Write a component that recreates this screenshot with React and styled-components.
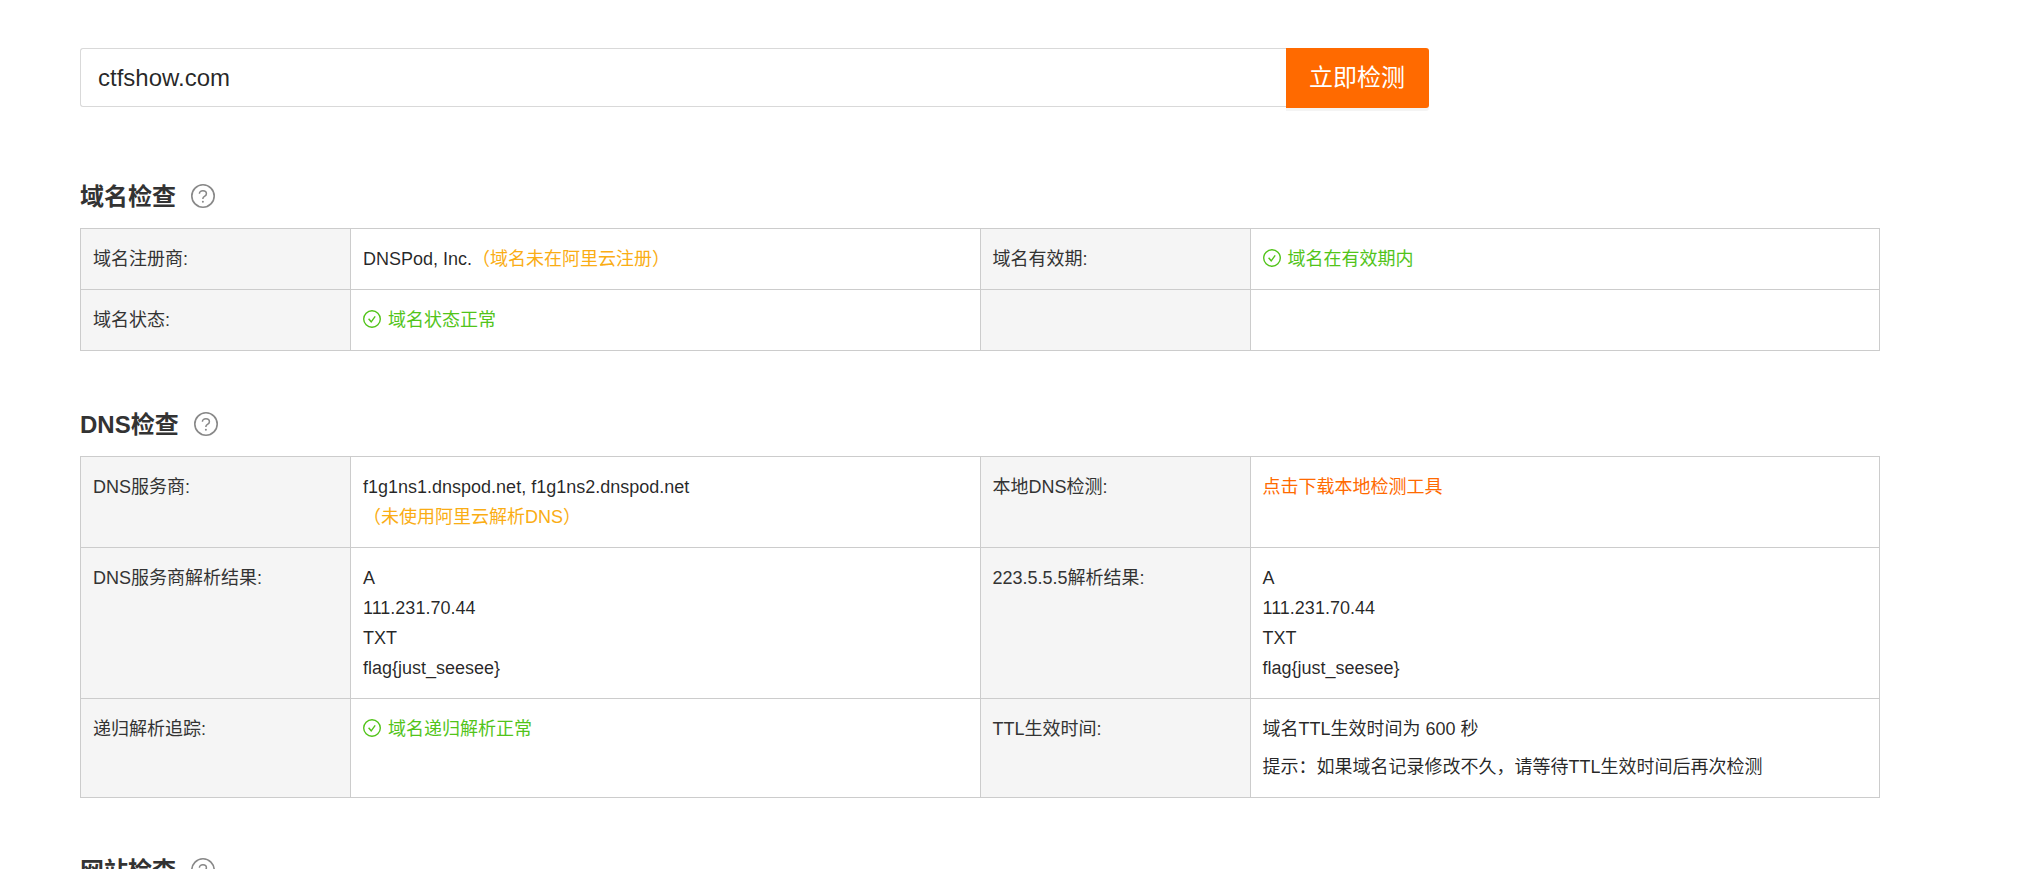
import React from "react"

import styled, { createGlobalStyle } from "styled-components"

const GlobalStyle = createGlobalStyle`
  * {
    box-sizing: border-box;
  }

  body {
    margin: 0;
    background: #fff;
    color: #333;
    font-family: "Liberation Sans", "Noto Sans CJK SC", sans-serif;
    font-size: 18px;
    line-height: 30px;
  }
`

const Page = styled.main`
  height: 869px;
  padding: 48px 153px 0 80px;
  overflow: hidden;
`

const SearchBar = styled.form`
  display: flex;
  align-items: flex-start;
  width: 1349px;
`

const DomainInput = styled.input`
  flex: 1;
  min-width: 0;
  height: 59px;
  padding: 0 17px;
  border: 1px solid #d9d9d9;
  border-right: 0;
  border-radius: 3px 0 0 3px;
  outline: 0;
  background: #fff;
  color: rgba(0, 0, 0, 0.85);
  font: 24px "Liberation Sans", "Noto Sans CJK SC", sans-serif;
`

const CheckButton = styled.button`
  width: 143px;
  height: 60px;
  padding: 0 1px 0 0;
  border: 0;
  border-radius: 0 3px 3px 0;
  background: #ff6a00;
  box-shadow: 0 3px 0 rgba(0, 0, 0, 0.045);
  color: #fff;
  font: 24px/60px "Liberation Sans", "Noto Sans CJK SC", sans-serif;
`

const Section = styled.section`
  margin-top: ${props => props.$gap}px;
`

const SectionTitle = styled.h2`
  display: flex;
  align-items: center;
  height: 36px;
  margin: 0 0 14px;
  font-size: 24px;
  font-weight: 700;
  line-height: 36px;
`

const TitleText = styled.span`
  padding-top: 2px;
`

const HelpSvg = styled.svg`
  width: 24px;
  height: 24px;
  margin-left: 15px;
  color: #888;
`

const Table = styled.div`
  display: grid;
  grid-template-columns: 270px 630px 270px 629px;
  width: 1800px;
  border-top: 1px solid #ccc;
  border-left: 1px solid #ccc;
`

const Cell = styled.div`
  padding: 15px 12px;
  border-right: 1px solid #ccc;
  border-bottom: 1px solid #ccc;
  min-height: 61px;

  &:nth-child(4n + 3),
  &:nth-child(4n) {
    padding-left: 11.5px;
  }
`

const Label = styled(Cell)`
  background: #f5f5f5;
`

const Value = styled(Cell)`
  color: rgba(0, 0, 0, 0.85);
`

const Notice = styled.span`
  color: #faad14;
`

const Link = styled.a`
  color: #ff6a00;
`

const Hint = styled.div`
  margin-top: 8px;
`

const Status = styled.div`
  display: flex;
  color: #52c41a;
`

const CheckSvg = styled.svg`
  flex: none;
  width: 18px;
  height: 18px;
  margin: 5px 7px 0 0;
`

const HelpIcon = () => (
  <HelpSvg viewBox="0 0 24 24" fill="none" stroke="currentColor">
    <circle cx="12" cy="12" r="11.2" strokeWidth="1.6" />
    <path
      d="M8.4 9.8C8.4 7.9 9.9 6.7 11.9 6.7s3.5 1.2 3.5 3c0 1.4-.8 2.1-1.9 2.7-1.1.6-1.6 1.1-1.6 2.2v.5"
      strokeWidth="1.5"
    />
    <circle cx="11.9" cy="17.7" r="1" fill="currentColor" stroke="none" />
  </HelpSvg>
)

const Ok = ({ children }) => (
  <Status>
    <CheckSvg viewBox="0 0 18 18" fill="none" stroke="currentColor">
      <circle cx="9" cy="9" r="8.3" strokeWidth="1.4" />
      <path d="M5.6 8.7l2.6 3.1 4-5.4" strokeWidth="1.4" />
    </CheckSvg>
    <span>{children}</span>
  </Status>
)

const Title = ({ children }) => (
  <SectionTitle>
    <TitleText>{children}</TitleText>
    <HelpIcon />
  </SectionTitle>
)

const Records = () => (
  <Value>
    <div>A</div>
    <div>111.231.70.44</div>
    <div>TXT</div>
    <div>flag&#123;just_seesee&#125;</div>
  </Value>
)

const App = () => (
  <>
    <GlobalStyle />
    <Page>
      <SearchBar>
        <DomainInput defaultValue="ctfshow.com" spellCheck={false} />
        <CheckButton type="button">立即检测</CheckButton>
      </SearchBar>

      <Section $gap={70}>
        <Title>域名检查</Title>
        <Table>
          <Label>域名注册商:</Label>
          <Value>
            DNSPod, Inc.<Notice>（域名未在阿里云注册）</Notice>
          </Value>
          <Label>域名有效期:</Label>
          <Value>
            <Ok>域名在有效期内</Ok>
          </Value>
          <Label>域名状态:</Label>
          <Value>
            <Ok>域名状态正常</Ok>
          </Value>
          <Label />
          <Value />
        </Table>
      </Section>

      <Section $gap={55}>
        <Title>DNS检查</Title>
        <Table>
          <Label>DNS服务商:</Label>
          <Value>
            <div>f1g1ns1.dnspod.net, f1g1ns2.dnspod.net</div>
            <Notice>（未使用阿里云解析DNS）</Notice>
          </Value>
          <Label>本地DNS检测:</Label>
          <Value>
            <Link>点击下载本地检测工具</Link>
          </Value>
          <Label>DNS服务商解析结果:</Label>
          <Records />
          <Label>223.5.5.5解析结果:</Label>
          <Records />
          <Label>递归解析追踪:</Label>
          <Value>
            <Ok>域名递归解析正常</Ok>
          </Value>
          <Label>TTL生效时间:</Label>
          <Value>
            <div>域名TTL生效时间为 600 秒</div>
            <Hint>提示：如果域名记录修改不久，请等待TTL生效时间后再次检测</Hint>
          </Value>
        </Table>
      </Section>

      <Section $gap={54}>
        <Title>网站检查</Title>
      </Section>
    </Page>
  </>
)

export default App
